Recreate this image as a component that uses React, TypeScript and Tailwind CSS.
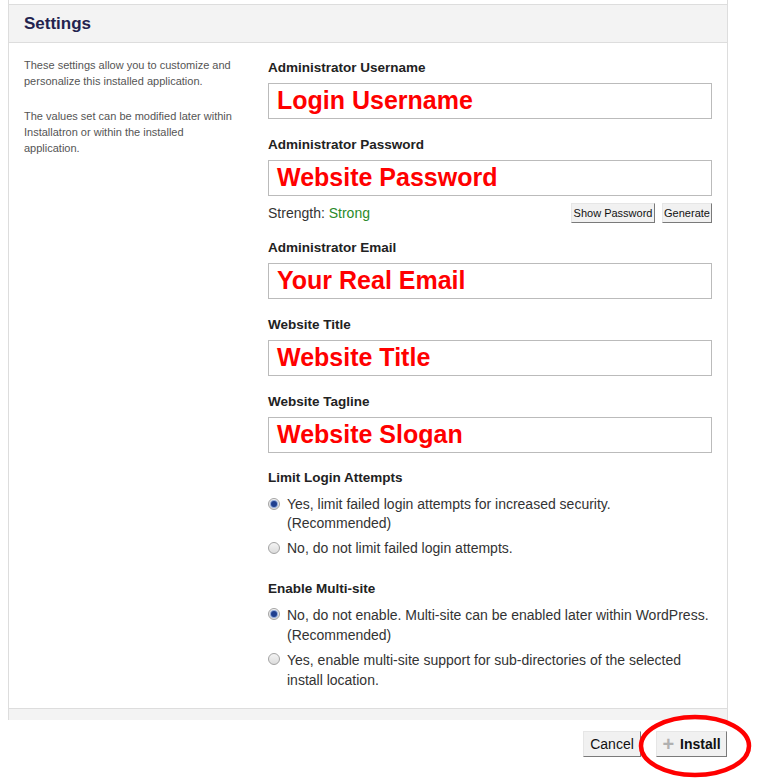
import React from "react";

const fields = [
  { label: "Administrator Username", value: "Login Username" },
  { label: "Administrator Password", value: "Website Password", password: true },
  { label: "Administrator Email", value: "Your Real Email" },
  { label: "Website Title", value: "Website Title" },
  { label: "Website Tagline", value: "Website Slogan" },
];

function Radio({ checked }: { checked?: boolean }) {
  return (
    <span className="mt-[3px] flex h-[12px] w-[12px] shrink-0 items-center justify-center rounded-full border border-[#a3a3a3] bg-gradient-to-b from-[#f4f4f4] to-[#dcdcdc]">
      {checked && <span className="h-[6px] w-[6px] rounded-full bg-[#1f3f8f] shadow-[0_0_0_1px_#8fa8d8]" />}
    </span>
  );
}

function Option({ checked, lines, tall }: { checked?: boolean; lines: string[]; tall?: boolean }) {
  return (
    <div className={"flex gap-[7px] text-[14px] text-[#333] " + (tall ? "leading-[20px]" : "leading-[19px]")}>
      <Radio checked={checked} />
      <div>
        {lines.map((l) => (
          <div key={l}>{l}</div>
        ))}
      </div>
    </div>
  );
}

function SmallButton({ children, className = "" }: { children: React.ReactNode; className?: string }) {
  return (
    <button
      className={
        "border border-t-[#e6e6e6] border-l-[#e6e6e6] border-r-[#7a7a7a] border-b-[#7a7a7a] bg-[#f1f1f1] text-[#111] " +
        className
      }
    >
      {children}
    </button>
  );
}

export default function App() {
  return (
    <div className="relative h-[782px] w-[760px] overflow-hidden bg-white font-['Liberation_Sans',Arial,sans-serif]">
      <div className="ml-2 w-[720px] border-x border-[#dddddd]">
        <div className="h-1" />
        <div className="flex h-[39px] items-center border-y border-[#dddddd] bg-[#f3f3f3] px-[15px]">
          <h2 className="text-[17px] font-bold text-[#23234f]">Settings</h2>
        </div>

        <div className="flex">
          <div className="w-[259px] pl-[15px] pt-[14px] text-[11px] leading-[16px] text-[#555]">
            <p className="w-[214px]">These settings allow you to customize and personalize this installed application.</p>
            <p className="mt-[19px] w-[214px]">
              The values set can be modified later within Installatron or within the installed application.
            </p>
          </div>

          <div className="w-[444px] pb-[18px] pt-[16px]">
            {fields.map((f) => (
              <div key={f.label} className="mb-[17px]">
                <label className="block text-[13.5px] font-bold leading-[17px] text-[#222]">{f.label}</label>
                <div className="mt-[7px] flex h-[36px] items-center border border-[#bbbbbb] bg-white pl-[8px] text-[25px] font-bold text-[#ff0000]">
                  {f.value}
                </div>
                {f.password && (
                  <div className="-mb-[1px] mt-[7px] flex h-[20px] items-center text-[14px] text-[#333]">
                    <span>
                      Strength: <span className="text-[#2a8a2a]">Strong</span>
                    </span>
                    <SmallButton className="ml-auto h-[20px] w-[84px] text-[11px]">Show Password</SmallButton>
                    <SmallButton className="ml-[7px] h-[20px] w-[50px] text-[11px]">Generate</SmallButton>
                  </div>
                )}
              </div>
            ))}

            <label className="block text-[13.5px] font-bold leading-[16px] text-[#222]">Limit Login Attempts</label>
            <div className="mt-[9px] flex flex-col gap-[6px]">
              <Option checked lines={["Yes, limit failed login attempts for increased security.", "(Recommended)"]} />
              <Option lines={["No, do not limit failed login attempts."]} />
            </div>

            <label className="mt-[23px] block text-[13.5px] font-bold leading-[16px] text-[#222]">Enable Multi-site</label>
            <div className="mt-[8px] flex flex-col gap-[5px]">
              <Option tall checked lines={["No, do not enable. Multi-site can be enabled later within WordPress.", "(Recommended)"]} />
              <Option tall lines={["Yes, enable multi-site support for sub-directories of the selected", "install location."]} />
            </div>
          </div>
        </div>

        <div className="h-[12px] border-t border-[#dddddd] bg-[#f3f3f3]" />
      </div>

      <div className="mt-[11px] flex w-[727px] justify-end gap-[15px]">
        <SmallButton className="h-[26px] w-[58px] text-[14px]">Cancel</SmallButton>
        <SmallButton className="flex h-[26px] w-[71px] items-center justify-center gap-[6px] text-[14px] font-bold">
          <span className="text-[20px] font-bold leading-none text-[#b0b0b0]">+</span>
          Install
        </SmallButton>
      </div>

      <svg className="absolute left-[636px] top-[712px]" width="120" height="68" viewBox="0 0 120 68">
        <ellipse cx="59" cy="34" rx="54" ry="29" fill="none" stroke="#ff0000" strokeWidth="4.5" />
      </svg>
    </div>
  );
}
